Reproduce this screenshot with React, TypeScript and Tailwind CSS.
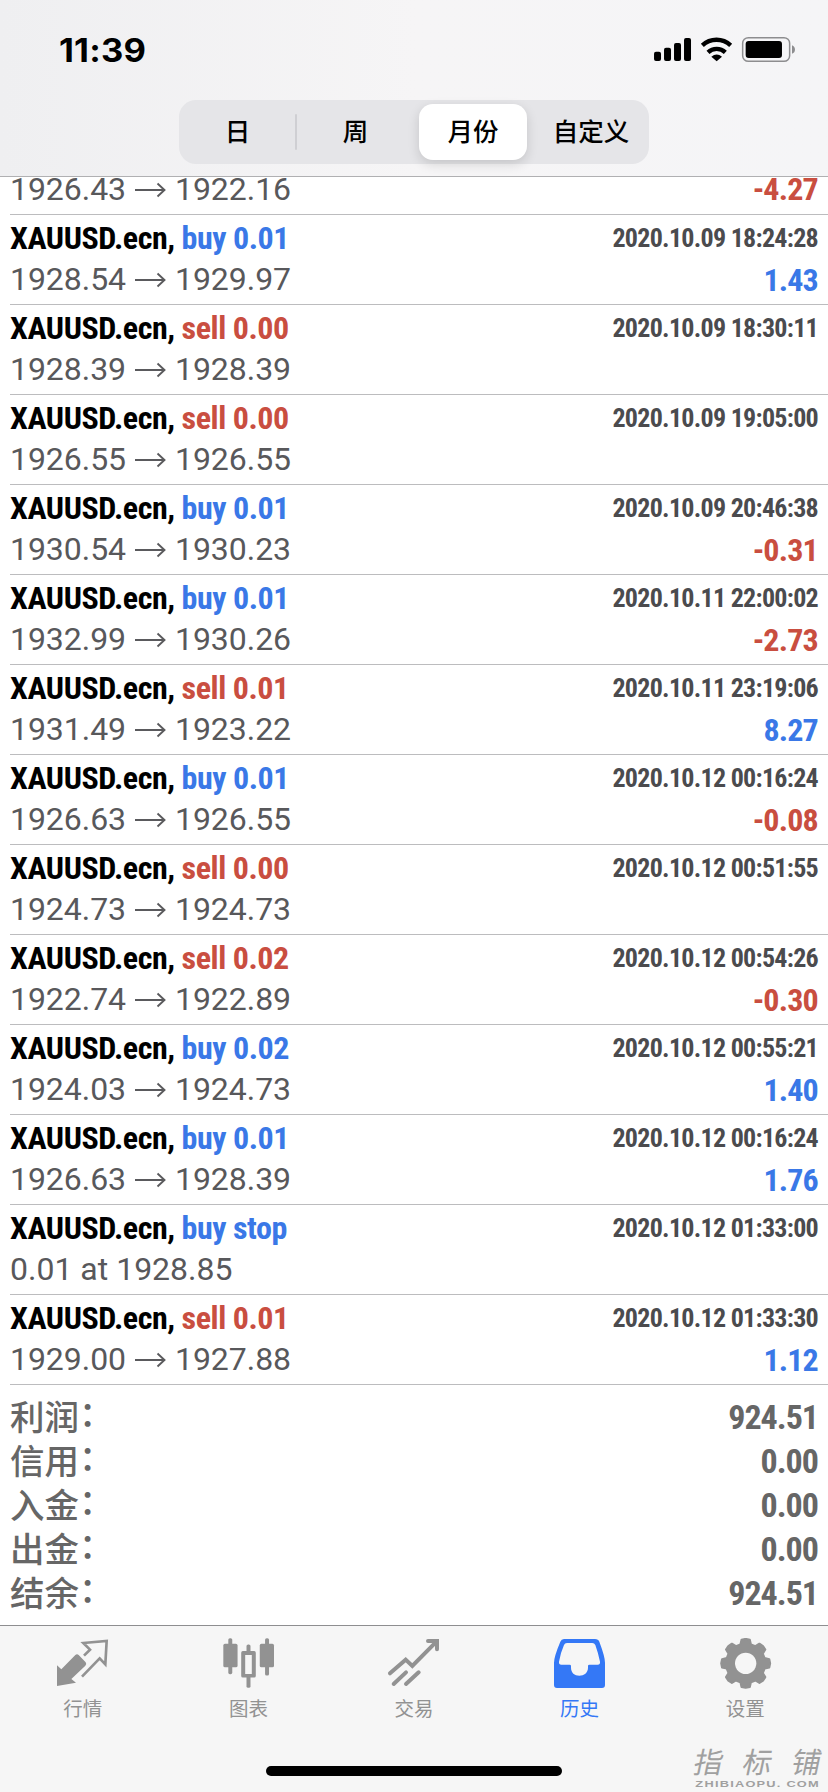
import type { ReactNode } from "react";

type Side = "buy" | "sell";
type Deal = {
  side: Side;
  volume: string;
  time: string;
  from?: string;
  to?: string;
  note?: string;
  profit?: string;
};

const deals: Deal[] = [
  { side: "buy", volume: "0.01", time: "2020.10.09 18:24:28", from: "1928.54", to: "1929.97", profit: "1.43" },
  { side: "sell", volume: "0.00", time: "2020.10.09 18:30:11", from: "1928.39", to: "1928.39" },
  { side: "sell", volume: "0.00", time: "2020.10.09 19:05:00", from: "1926.55", to: "1926.55" },
  { side: "buy", volume: "0.01", time: "2020.10.09 20:46:38", from: "1930.54", to: "1930.23", profit: "-0.31" },
  { side: "buy", volume: "0.01", time: "2020.10.11 22:00:02", from: "1932.99", to: "1930.26", profit: "-2.73" },
  { side: "sell", volume: "0.01", time: "2020.10.11 23:19:06", from: "1931.49", to: "1923.22", profit: "8.27" },
  { side: "buy", volume: "0.01", time: "2020.10.12 00:16:24", from: "1926.63", to: "1926.55", profit: "-0.08" },
  { side: "sell", volume: "0.00", time: "2020.10.12 00:51:55", from: "1924.73", to: "1924.73" },
  { side: "sell", volume: "0.02", time: "2020.10.12 00:54:26", from: "1922.74", to: "1922.89", profit: "-0.30" },
  { side: "buy", volume: "0.02", time: "2020.10.12 00:55:21", from: "1924.03", to: "1924.73", profit: "1.40" },
  { side: "buy", volume: "0.01", time: "2020.10.12 00:16:24", from: "1926.63", to: "1928.39", profit: "1.76" },
  { side: "buy", volume: "stop", time: "2020.10.12 01:33:00", note: "0.01 at 1928.85" },
  { side: "sell", volume: "0.01", time: "2020.10.12 01:33:30", from: "1929.00", to: "1927.88", profit: "1.12" },
];

const totals: [string, string][] = [
  ["利润", "924.51"],
  ["信用", "0.00"],
  ["入金", "0.00"],
  ["出金", "0.00"],
  ["结余", "924.51"],
];

function Arrow() {
  return (
    <svg viewBox="0 0 32 20" className="ml-[8px] mr-[9px] mt-[2px] h-5 w-8 shrink-0" fill="none" stroke="#5a5a5d" strokeWidth="1.9">
      <path d="M1 10H30.5M23.5 3.5L30.5 10L23.5 16.5" />
    </svg>
  );
}

function Prices({ from, to }: { from: string; to: string }) {
  return (
    <div className="flex h-9 items-center text-[32px] leading-[36px] font-normal tracking-[-0.05px] text-[#58585b]">
      <span>{from}</span>
      <Arrow />
      <span>{to}</span>
    </div>
  );
}

function Profit({ value }: { value?: string }) {
  if (!value) return null;
  const tone = value.startsWith("-") ? "text-[#c94e40]" : "text-[#3a78e7]";
  return (
    <span className={`text-[32px] leading-[38px] font-bold tracking-[-0.8px] [font-stretch:75%] ${tone}`}>{value}</span>
  );
}

function DealRow({ deal }: { deal: Deal }) {
  const tone = deal.side === "buy" ? "text-[#3a78e7]" : "text-[#c94e40]";
  return (
    <li className="ml-[10px] h-[90px] border-b border-[#bcbcbe] pr-[10px]">
      <div className="flex h-[46px] justify-between">
        <div className="text-[32px] leading-[46px] font-bold tracking-[-0.45px] [font-stretch:75%]">
          <span className="text-black">XAUUSD.ecn, </span>
          <span className={tone}>
            {deal.side} {deal.volume}
          </span>
        </div>
        <time className="text-[26px] leading-[46px] font-bold tracking-[-0.72px] text-[#4b4b4e] [font-stretch:75%]">
          {deal.time}
        </time>
      </div>
      <div className="flex justify-between">
        {deal.from && deal.to ? (
          <Prices from={deal.from} to={deal.to} />
        ) : (
          <span className="text-[32px] leading-[36px] font-normal text-[#58585b]">{deal.note}</span>
        )}
        <Profit value={deal.profit} />
      </div>
    </li>
  );
}

function StatusIcons() {
  return (
    <svg viewBox="714 108 429 80" className="h-[26.67px] w-[143px]">
      <rect x="717" y="155" width="21" height="28" rx="6" />
      <rect x="747" y="143" width="21" height="40" rx="6" />
      <rect x="777" y="129" width="21" height="54" rx="6" />
      <rect x="807" y="114" width="21" height="69" rx="6" />
      <g fill="none" stroke="#000" strokeWidth="13">
        <path d="M862 136A62 62 0 0 1 947 136" />
        <path d="M879 157A38 38 0 0 1 931 157" />
      </g>
      <path d="M889 170Q905 157 921 170L905 184Z" />
      <rect x="983" y="113" width="141" height="71" rx="17" fill="none" stroke="#8d8d8f" strokeWidth="4.5" />
      <rect x="992" y="123" width="109" height="51" rx="9" />
      <path d="M1131 136Q1140 140 1140 149Q1140 158 1131 161Z" fill="#8d8d8f" />
    </svg>
  );
}

function SegmentedControl() {
  return (
    <div className="flex h-16 w-[470px] rounded-[17px] bg-[#e5e5e8] p-1 pr-0 text-[25.5px] leading-[57px] font-medium text-black">
      <div className="w-[112px] pr-[3px] text-center">日</div>
      <div className="my-[10px] w-[2px] rounded-full bg-[#cfcfd3]" />
      <div className="w-[117px] text-center">周</div>
      <div className="ml-[5px] w-[108px] rounded-[14px] bg-white text-center shadow-[0_4px_12px_rgba(0,0,0,0.14)]">月份</div>
      <div className="ml-[6px] w-[116px] text-center">自定义</div>
    </div>
  );
}

function QuotesIcon() {
  return (
    <svg viewBox="168 84 159 150" className="h-[50px] w-[53px]">
      <path d="M171 166L184 178L226 135Q231 130 236 135L257 157Q261 162 256 167L214 207L228 218L171 228Z" fill="#929292" />
      <path d="M252 137L270 119L250 99L320 93L316 163L299 145L246 200" fill="none" stroke="#929292" strokeWidth="8" />
    </svg>
  );
}

function ChartIcon() {
  return (
    <svg viewBox="665 84 160 150" className="h-[50px] w-[53px]" fill="#929292">
      <rect x="684" y="84" width="12" height="109" rx="5" />
      <rect x="669" y="101" width="43" height="71" rx="5" />
      <rect x="795" y="84" width="12" height="113" rx="5" />
      <rect x="779" y="101" width="43" height="71" rx="5" />
      <rect x="739" y="103" width="12" height="24" rx="5" />
      <rect x="739" y="198" width="12" height="36" rx="5" />
      <path fillRule="evenodd" d="M728 123H762Q767 123 767 128V198Q767 203 762 203H728Q723 203 723 198V128Q723 123 728 123ZM735 135V192H755V135Z" />
    </svg>
  );
}

function TradeIcon() {
  return (
    <svg viewBox="261 84 159 150" className="h-[50px] w-[53px]" fill="none" stroke="#929292" strokeWidth="12" strokeLinecap="round">
      <path d="M270 190L317 149L337 168L410 94" />
      <path d="M384 93H411V118" />
      <path d="M281 222L318 187M318 222L356 187" />
    </svg>
  );
}

function HistoryIcon() {
  return (
    <svg viewBox="12 84 159 150" className="h-[50px] w-[53px]" fill="#3478f6">
      <path
        fillRule="evenodd"
        d="M45 87H138Q148 87 151 95Q168 140 168 158V225Q168 234 159 234H24Q15 234 15 225V158Q15 140 34 95Q37 87 45 87ZM54 99Q47 99 45 105Q34 130 30 155Q29 164 37 164H62Q66 164 66 168V173C66 188 77 197 91 197S117 188 117 173V168Q117 164 121 164H146Q154 164 153 155Q148 130 139 105Q136 99 130 99Z"
      />
    </svg>
  );
}

const gearPoints = Array.from({ length: 8 }, (_, i) =>
  [
    [-15.5, 59],
    [-10, 72],
    [0, 73.5],
    [10, 72],
    [15.5, 59],
  ].map(([deg, r]) => {
    const a = ((i * 45 + deg) * Math.PI) / 180;
    return `${(590 + r * Math.sin(a)).toFixed(1)},${(160 - r * Math.cos(a)).toFixed(1)}`;
  }),
)
  .flat()
  .join(" ");

function SettingsIcon() {
  return (
    <svg viewBox="510 84 159 153" className="h-[51px] w-[53px]">
      <polygon points={gearPoints} fill="#929292" stroke="#929292" strokeWidth="6" strokeLinejoin="round" />
      <circle cx="590" cy="160" r="32" fill="#f6f6f6" />
    </svg>
  );
}

function Tab({ label, active, children }: { label: string; active?: boolean; children: ReactNode }) {
  return (
    <div className="flex flex-1 flex-col items-center">
      <div className="h-[58px]">{children}</div>
      <span className={`text-[19.5px] leading-[28px] ${active ? "text-[#3478f6]" : "text-[#929292]"}`}>{label}</span>
    </div>
  );
}

function Watermark() {
  return (
    <div className="absolute right-[7px] bottom-[4px] w-[127px] text-[#a0a0a0]">
      <div className="flex justify-between text-[29px] leading-[33px] font-normal">
        <span className="-skew-x-12">指</span>
        <span className="-skew-x-12">标</span>
        <span className="-skew-x-12">铺</span>
      </div>
      <div className="origin-left scale-x-[1.35] pl-px font-['Liberation_Sans'] text-[9.5px] leading-[8px] font-bold tracking-[0.9px] whitespace-nowrap">
        ZHIBIAOPU. COM
      </div>
    </div>
  );
}

export default function App() {
  return (
    <div className="relative flex h-[1792px] w-[828px] flex-col overflow-hidden bg-white font-['Roboto','Noto_Sans_CJK_SC',sans-serif]">
      <header className="flex h-[177px] shrink-0 flex-col items-center border-b border-[#b0b0b2] bg-linear-to-r from-[#efeff1] via-[#f6f5f6] to-[#f5f5f7]">
        <div className="flex h-[100px] w-full justify-between pr-[32px] pl-[59px]">
          <span className="origin-left scale-x-[1.08] pt-[31px] font-['Inter'] text-[32px] leading-[40px] font-bold tracking-[0.2px] text-black">
            11:39
          </span>
          <div className="pt-[36px]">
            <StatusIcons />
          </div>
        </div>
        <SegmentedControl />
      </header>

      <main className="flex-1">
        <div className="ml-[10px] flex h-[38px] items-end justify-between overflow-hidden border-b border-[#bcbcbe] pr-[10px] pb-[6px]">
          <div className="mb-px">
            <Prices from="1926.43" to="1922.16" />
          </div>
          <Profit value="-4.27" />
        </div>
        <ul>
          {deals.map((deal, i) => (
            <DealRow key={i} deal={deal} />
          ))}
        </ul>
        <dl className="px-[10px] pt-[9px]">
          {totals.map(([label, value]) => (
            <div key={label} className="flex h-11 justify-between text-[#666]">
              <dt className="flex font-['Noto_Sans_CJK_SC'] text-[34.5px] leading-[42px] font-medium">
                <span>{label}</span>
                <span className="-mt-[4px]">：</span>
              </dt>
              <dd className="text-[34px] leading-[46px] font-bold tracking-[-1px] [font-stretch:75%]">{value}</dd>
            </div>
          ))}
        </dl>
      </main>

      <nav className="flex h-[167px] shrink-0 flex-col items-center border-t border-[#8e8e90] bg-[#f6f6f6]">
        <div className="flex h-[140px] w-full pt-3">
          <Tab label="行情">
            <QuotesIcon />
          </Tab>
          <Tab label="图表">
            <ChartIcon />
          </Tab>
          <Tab label="交易">
            <TradeIcon />
          </Tab>
          <Tab label="历史" active>
            <HistoryIcon />
          </Tab>
          <Tab label="设置">
            <SettingsIcon />
          </Tab>
        </div>
        <div className="h-[10px] w-[296px] rounded-full bg-black" />
      </nav>
      <Watermark />
    </div>
  );
}
